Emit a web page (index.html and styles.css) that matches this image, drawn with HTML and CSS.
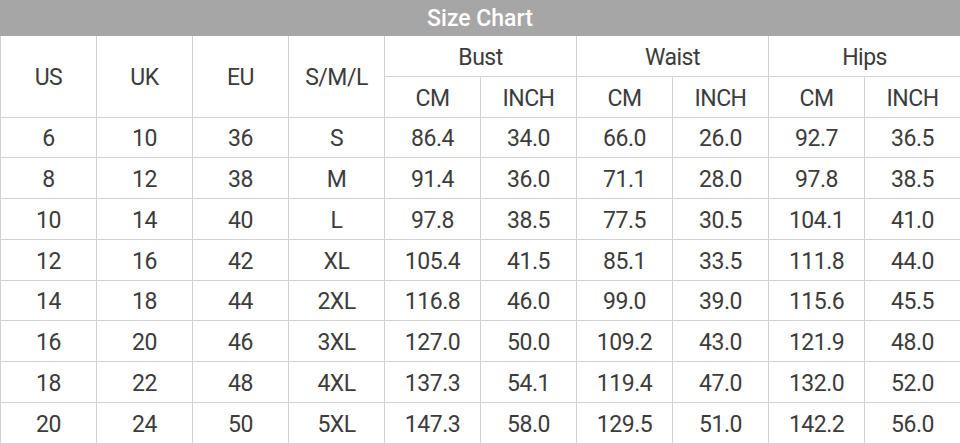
FILE: index.html
```html
<!DOCTYPE html>
<html>
<head>
<meta charset="utf-8">
<link rel="stylesheet" href="styles.css">
</head>
<body>
<div class="chart">
  <div class="title">Size Chart</div>
  <table class="grid">
    <colgroup>
      <col><col><col><col><col><col><col><col><col><col>
    </colgroup>
    <thead>
      <tr class="h1">
        <th rowspan="2">US</th>
        <th rowspan="2">UK</th>
        <th rowspan="2">EU</th>
        <th rowspan="2">S/M/L</th>
        <th colspan="2">Bust</th>
        <th colspan="2">Waist</th>
        <th colspan="2">Hips</th>
      </tr>
      <tr class="h2">
        <th>CM</th><th>INCH</th>
        <th>CM</th><th>INCH</th>
        <th>CM</th><th>INCH</th>
      </tr>
    </thead>
    <tbody>
      <tr><td>6</td><td>10</td><td>36</td><td>S</td><td>86.4</td><td>34.0</td><td>66.0</td><td>26.0</td><td>92.7</td><td>36.5</td></tr>
      <tr><td>8</td><td>12</td><td>38</td><td>M</td><td>91.4</td><td>36.0</td><td>71.1</td><td>28.0</td><td>97.8</td><td>38.5</td></tr>
      <tr><td>10</td><td>14</td><td>40</td><td>L</td><td>97.8</td><td>38.5</td><td>77.5</td><td>30.5</td><td>104.1</td><td>41.0</td></tr>
      <tr><td>12</td><td>16</td><td>42</td><td>XL</td><td>105.4</td><td>41.5</td><td>85.1</td><td>33.5</td><td>111.8</td><td>44.0</td></tr>
      <tr><td>14</td><td>18</td><td>44</td><td>2XL</td><td>116.8</td><td>46.0</td><td>99.0</td><td>39.0</td><td>115.6</td><td>45.5</td></tr>
      <tr><td>16</td><td>20</td><td>46</td><td>3XL</td><td>127.0</td><td>50.0</td><td>109.2</td><td>43.0</td><td>121.9</td><td>48.0</td></tr>
      <tr><td>18</td><td>22</td><td>48</td><td>4XL</td><td>137.3</td><td>54.1</td><td>119.4</td><td>47.0</td><td>132.0</td><td>52.0</td></tr>
      <tr><td>20</td><td>24</td><td>50</td><td>5XL</td><td>147.3</td><td>58.0</td><td>129.5</td><td>51.0</td><td>142.2</td><td>56.0</td></tr>
    </tbody>
  </table>
</div>
</body>
</html>
```
FILE: styles.css
```css
html, body {
  margin: 0;
  padding: 0;
  background: #ffffff;
}
.chart {
  width: 960px;
  font-family: Roboto, "Liberation Sans", sans-serif;
  color: #3c3c3c;
}
.title {
  height: 36px;
  background: #a6a6a6;
  color: #ffffff;
  font-size: 23px;
  font-weight: 500;
  display: flex;
  align-items: center;
  justify-content: center;
}
.grid {
  width: 960px;
  border-collapse: collapse;
  table-layout: fixed;
}
.grid col {
  width: 96px;
}
.grid th,
.grid td {
  border: 1px solid #d2d2d2;
  padding: 4px 0 0 0;
  text-align: center;
  vertical-align: middle;
  font-size: 23px;
  font-weight: 400;
  line-height: 24px;
  letter-spacing: -0.5px;
}
.grid tr:first-child th {
  border-top: none;
}
.grid .h1 {
  height: 40px;
}
.grid .h2 {
  height: 41px;
}
.grid tbody tr {
  height: 40.75px;
}
```
